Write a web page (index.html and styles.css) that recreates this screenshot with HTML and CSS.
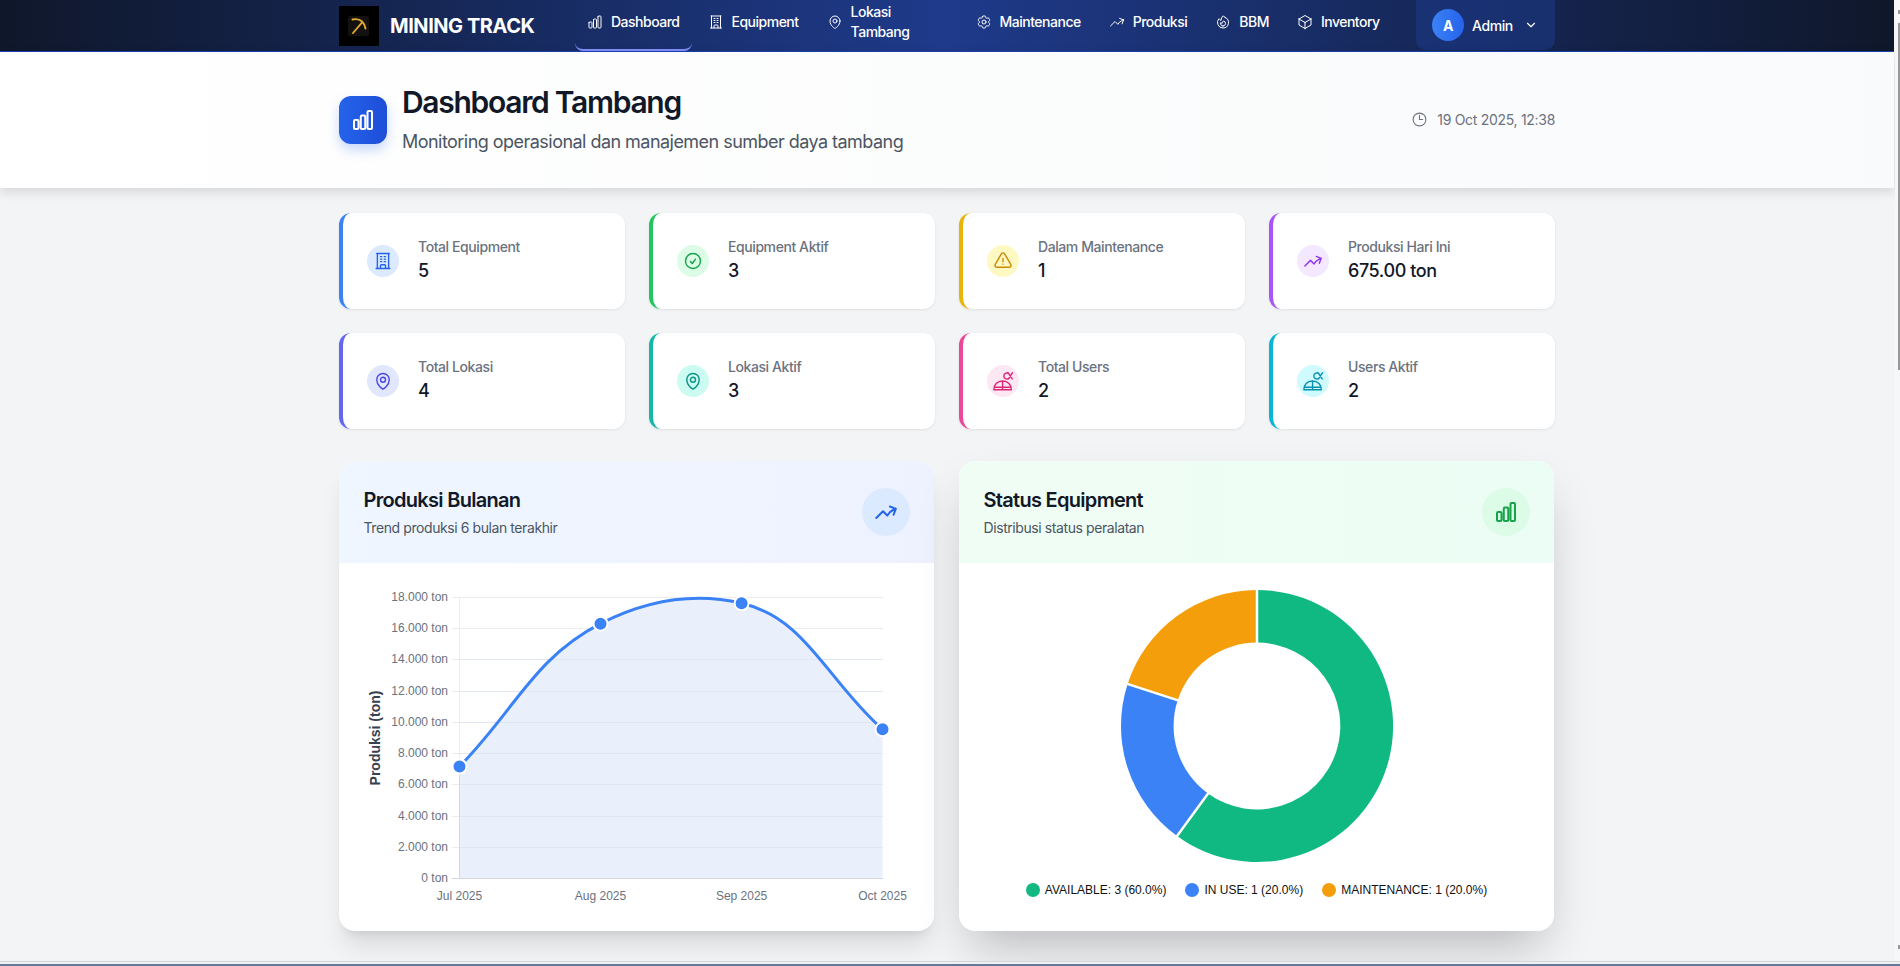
FILE: index.html
```html
<!DOCTYPE html>
<html lang="id">
<head>
    <meta charset="UTF-8">
    <title>Dashboard Tambang</title>
    <link rel="stylesheet" href="styles.css">
</head>
<body>
    <svg class="sprite" width="0" height="0">
        <symbol id="i-chart" viewBox="0 0 24 24"><path d="M3 13.125C3 12.504 3.504 12 4.125 12h2.250c.621 0 1.125.504 1.125 1.125v6.750C7.500 20.496 6.996 21 6.375 21h-2.250A1.125 1.125 0 0 1 3 19.875v-6.750ZM9.750 8.625c0-.621.504-1.125 1.125-1.125h2.250c.621 0 1.125.504 1.125 1.125v11.250c0 .621-.504 1.125-1.125 1.125h-2.250a1.125 1.125 0 0 1-1.125-1.125V8.625ZM16.500 4.125c0-.621.504-1.125 1.125-1.125h2.250C20.496 3 21 3.504 21 4.125v15.750c0 .621-.504 1.125-1.125 1.125h-2.250a1.125 1.125 0 0 1-1.125-1.125V4.125Z"/></symbol>
        <symbol id="i-building" viewBox="0 0 24 24"><path d="M3.750 21h16.500M4.500 3h15M5.250 3v18m13.500-18v18M9 6.750h1.500m-1.500 3h1.500m-1.500 3h1.500m3-6H15m-1.500 3H15m-1.500 3H15M9 21v-3.375c0-.621.504-1.125 1.125-1.125h3.750c.621 0 1.125.504 1.125 1.125V21"/></symbol>
        <symbol id="i-pin" viewBox="0 0 24 24"><path d="M15 10.500a3 3 0 1 1-6 0 3 3 0 0 1 6 0Z"/><path d="M19.500 10.500c0 7.142-7.500 11.250-7.500 11.250S4.500 17.642 4.500 10.500a7.500 7.500 0 1 1 15 0Z"/></symbol>
        <symbol id="i-gear" viewBox="0 0 24 24"><path d="M9.594 3.940c.09-.542.56-.94 1.110-.94h2.593c.55 0 1.020.398 1.110.94l.213 1.281c.063.374.313.686.645.870.074.04.147.083.22.127.325.196.72.257 1.075.124l1.217-.456a1.125 1.125 0 0 1 1.370.490l1.296 2.247a1.125 1.125 0 0 1-.26 1.431l-1.003.827c-.293.241-.438.613-.43.992a7.723 7.723 0 0 1 0 .255c-.008.378.137.75.43.991l1.004.827c.424.35.534.955.26 1.430l-1.298 2.247a1.125 1.125 0 0 1-1.369.491l-1.217-.456c-.355-.133-.75-.072-1.076.124a6.470 6.470 0 0 1-.22.128c-.331.183-.581.495-.644.869l-.213 1.281c-.09.543-.56.94-1.110.94h-2.594c-.55 0-1.019-.398-1.110-.94l-.213-1.281c-.062-.374-.312-.686-.644-.870a6.520 6.520 0 0 1-.22-.127c-.325-.196-.72-.257-1.076-.124l-1.217.456a1.125 1.125 0 0 1-1.369-.49l-1.297-2.247a1.125 1.125 0 0 1 .26-1.431l1.004-.827c.292-.24.437-.613.43-.991a6.932 6.932 0 0 1 0-.255c.007-.38-.138-.751-.43-.992l-1.004-.827a1.125 1.125 0 0 1-.26-1.430l1.297-2.247a1.125 1.125 0 0 1 1.370-.491l1.216.456c.356.133.751.072 1.076-.124.072-.044.146-.086.22-.128.332-.183.582-.495.644-.869l.214-1.280Z"/><path d="M15 12a3 3 0 1 1-6 0 3 3 0 0 1 6 0Z"/></symbol>
        <symbol id="i-trend" viewBox="0 0 24 24"><path d="M2.250 18 9 11.250l4.306 4.306a11.950 11.950 0 0 1 5.814-5.518l2.740-1.220m0 0-5.940-2.281m5.940 2.280-2.280 5.941"/></symbol>
        <symbol id="i-fire" viewBox="0 0 24 24"><path d="M15.362 5.214A8.252 8.252 0 0 1 12 21 8.250 8.250 0 0 1 6.038 7.047 8.287 8.287 0 0 0 9 9.601a8.983 8.983 0 0 1 3.361-6.867 8.210 8.210 0 0 0 3 2.480Z"/><path d="M12 18a3.750 3.750 0 0 0 .495-7.468 5.990 5.990 0 0 0-1.925 3.547 5.975 5.975 0 0 1-2.133-1.001A3.750 3.750 0 0 0 12 18Z"/></symbol>
        <symbol id="i-cube" viewBox="0 0 24 24"><path d="m21 7.500-9-5.250L3 7.500m18 0-9 5.250m9-5.250v9l-9 5.250M3 7.500l9 5.250M3 7.500v9l9 5.250m0-9v9"/></symbol>
        <symbol id="i-clock" viewBox="0 0 24 24"><path d="M12 6v6h4.500m4.500 0a9 9 0 1 1-18 0 9 9 0 0 1 18 0Z"/></symbol>
        <symbol id="i-check" viewBox="0 0 24 24"><path d="M9 12.750 11.250 15 15 9.750M21 12a9 9 0 1 1-18 0 9 9 0 0 1 18 0Z"/></symbol>
        <symbol id="i-warn" viewBox="0 0 24 24"><path d="M12 9v3.750m-9.303 3.376c-.866 1.500.217 3.374 1.948 3.374h14.710c1.730 0 2.813-1.874 1.948-3.374L13.949 3.378c-.866-1.500-3.032-1.500-3.898 0L2.697 16.126ZM12 15.750h.007v.008H12v-.008Z"/></symbol>
        <symbol id="i-users" viewBox="0 0 24 24"><path d="M1 22.500c0-6 4-10.500 10.500-10.500S22 16.500 22 22.500ZM1.500 19.500h20M11.500 12v10.500M19 2.800C16 1.500 13 3 13 6s3 4.500 6 3.200M18 2l5 7.500M23.500 2l-5 7.500"/></symbol>
    </svg>

    <div class="page">
        <nav class="navbar">
            <div class="nav-inner">
                <div class="brand">
                    <div class="brand-logo">
                        <svg viewBox="0 0 40 40" width="40" height="40"><rect x="9" y="10" width="21" height="20" rx="2" fill="#141210" stroke="none"/><path d="M13.500 13.500c5-1 11-.5 13 9M23 16.500 14 27" stroke="#e3ac2d" stroke-width="1.900"/></svg>
                    </div>
                    <span class="brand-name">MINING TRACK</span>
                </div>
                <div class="nav-links">
                    <a class="nav-link active"><svg class="nav-icon"><use href="#i-chart"/></svg>Dashboard</a>
                    <a class="nav-link"><svg class="nav-icon"><use href="#i-building"/></svg>Equipment</a>
                    <a class="nav-link nav-wrap"><svg class="nav-icon"><use href="#i-pin"/></svg><span>Lokasi<br>Tambang</span></a>
                    <a class="nav-link"><svg class="nav-icon"><use href="#i-gear"/></svg>Maintenance</a>
                    <a class="nav-link"><svg class="nav-icon"><use href="#i-trend"/></svg>Produksi</a>
                    <a class="nav-link"><svg class="nav-icon"><use href="#i-fire"/></svg>BBM</a>
                    <a class="nav-link"><svg class="nav-icon"><use href="#i-cube"/></svg>Inventory</a>
                </div>
                <div class="user-menu">
                    <span class="avatar">A</span>
                    <span class="user-name">Admin</span>
                    <svg class="chev" viewBox="0 0 24 24"><path d="m6 9 6 6 6-6"/></svg>
                </div>
            </div>
        </nav>

        <header class="page-header">
            <div class="header-inner">
                <div class="header-left">
                    <div class="header-icon"><svg><use href="#i-chart"/></svg></div>
                    <div>
                        <h1>Dashboard Tambang</h1>
                        <p>Monitoring operasional dan manajemen sumber daya tambang</p>
                    </div>
                </div>
                <div class="header-time"><svg><use href="#i-clock"/></svg>19 Oct 2025, 12:38</div>
            </div>
        </header>

        <main class="content">
            <section class="stats">
                <div class="stat blue"><div class="stat-icon"><svg><use href="#i-building"/></svg></div><div><div class="stat-label">Total Equipment</div><div class="stat-value">5</div></div></div>
                <div class="stat green"><div class="stat-icon"><svg><use href="#i-check"/></svg></div><div><div class="stat-label">Equipment Aktif</div><div class="stat-value">3</div></div></div>
                <div class="stat yellow"><div class="stat-icon"><svg><use href="#i-warn"/></svg></div><div><div class="stat-label">Dalam Maintenance</div><div class="stat-value">1</div></div></div>
                <div class="stat purple"><div class="stat-icon"><svg><use href="#i-trend"/></svg></div><div><div class="stat-label">Produksi Hari Ini</div><div class="stat-value">675.00 ton</div></div></div>
                <div class="stat indigo"><div class="stat-icon"><svg><use href="#i-pin"/></svg></div><div><div class="stat-label">Total Lokasi</div><div class="stat-value">4</div></div></div>
                <div class="stat teal"><div class="stat-icon"><svg><use href="#i-pin"/></svg></div><div><div class="stat-label">Lokasi Aktif</div><div class="stat-value">3</div></div></div>
                <div class="stat pink"><div class="stat-icon"><svg><use href="#i-users"/></svg></div><div><div class="stat-label">Total Users</div><div class="stat-value">2</div></div></div>
                <div class="stat cyan"><div class="stat-icon"><svg><use href="#i-users"/></svg></div><div><div class="stat-label">Users Aktif</div><div class="stat-value">2</div></div></div>
            </section>

            <section class="charts">
                <div class="card">
                    <div class="card-head head-blue">
                        <div><h2>Produksi Bulanan</h2><p>Trend produksi 6 bulan terakhir</p></div>
                        <div class="head-icon"><svg><use href="#i-trend"/></svg></div>
                    </div>
                    <svg class="plot" viewBox="0 0 594 368" width="594" height="368">
                        <path class="grid" d="M112 34.500H542.500M112 65.500H542.500M112 96.500H542.500M112 128.500H542.500M112 159.500H542.500M112 190.500H542.500M112 221.500H542.500M112 253.500H542.500M112 284.500H542.500"/>
                        <path class="grid" d="M119.500 34V316"/>
                        <path class="area" d="M119.500 203.500C175.700 146 194 95 260.500 60.700C305 38 353 29 401.600 40.300C465.900 55 486 116 542.500 166.300V315.500H119.500Z"/>
                        <path class="grid-over" d="M120 96.500H542.500M120 128.500H542.500M120 159.500H542.500M120 190.500H542.500M120 221.500H542.500M120 253.500H542.500M120 284.500H542.500"/>
                        <path class="axis" d="M112 315.500H542.500M119.500 203V315"/>
                        <path class="line" d="M119.500 203.500C175.700 146 194 95 260.500 60.700C305 38 353 29 401.600 40.300C465.900 55 486 116 542.500 166.300"/>
                        <circle class="dot" cx="119.500" cy="203.500" r="7"/>
                        <circle class="dot" cx="260.500" cy="60.700" r="7"/>
                        <circle class="dot" cx="401.600" cy="40.300" r="7"/>
                        <circle class="dot" cx="542.500" cy="166.300" r="7"/>
                        <g class="y-labels">
                            <text x="108" y="38">18.000 ton</text>
                            <text x="108" y="69">16.000 ton</text>
                            <text x="108" y="100">14.000 ton</text>
                            <text x="108" y="132">12.000 ton</text>
                            <text x="108" y="163">10.000 ton</text>
                            <text x="108" y="194">8.000 ton</text>
                            <text x="108" y="225">6.000 ton</text>
                            <text x="108" y="257">4.000 ton</text>
                            <text x="108" y="288">2.000 ton</text>
                            <text x="108" y="319">0 ton</text>
                        </g>
                        <g class="x-labels">
                            <text x="119.500" y="337">Jul 2025</text>
                            <text x="260.500" y="337">Aug 2025</text>
                            <text x="401.600" y="337">Sep 2025</text>
                            <text x="542.500" y="337">Oct 2025</text>
                        </g>
                        <text class="y-title" transform="translate(40 175) rotate(-90)">Produksi (ton)</text>
                    </svg>
                </div>
                <div class="card card-raised">
                    <div class="card-head head-green">
                        <div><h2>Status Equipment</h2><p>Distribusi status peralatan</p></div>
                        <div class="head-icon"><svg><use href="#i-chart"/></svg></div>
                    </div>
                    <div class="donut-body">
                        <svg class="donut" viewBox="0 0 280 280" width="278" height="278">
                            <path class="s-green" d="M140 3A137 137 0 1 1 59.500 250.800L90.600 208A84 84 0 1 0 140 56Z"/>
                            <path class="s-blue" d="M59.500 250.800A137 137 0 0 1 9.700 97.700L60.100 114A84 84 0 0 0 90.600 208Z"/>
                            <path class="s-amber" d="M9.700 97.700A137 137 0 0 1 140 3V56A84 84 0 0 0 60.100 114Z"/>
                            <path class="gaps" d="M140 1V58M58 252.800 91.800 206.400M7.800 97.100 62 114.700"/>
                        </svg>
                        <div class="legend">
                            <span class="legend-item"><i class="swatch s-green"></i>AVAILABLE: 3 (60.0%)</span>
                            <span class="legend-item"><i class="swatch s-blue"></i>IN USE: 1 (20.0%)</span>
                            <span class="legend-item"><i class="swatch s-amber"></i>MAINTENANCE: 1 (20.0%)</span>
                        </div>
                    </div>
                </div>
            </section>
        </main>
    </div>
    <div class="scrollbar"><div class="thumb"></div></div>
    <div class="window-edge"></div>
</body>
</html>
```

FILE: styles.css
```css
* { box-sizing: border-box; }
html, body { height: 966px; overflow: hidden; }
body { margin: 0; background: #f3f4f6; font-family: Inter, "Noto Sans", sans-serif; color: #111827; letter-spacing: -0.026em; position: relative; }
.sprite { position: absolute; }
svg { display: block; fill: none; stroke: currentColor; stroke-width: 1.5; stroke-linecap: round; stroke-linejoin: round; }
.page { width: 1894px; }

.navbar { height: 52px; background: linear-gradient(90deg, #0f172a, #1e3a8a 50%, #0f172a); border-bottom: 1px solid #1e40af; }
.nav-inner { width: 1216px; margin: 0 auto; height: 51px; display: flex; align-items: stretch; }
.brand { display: flex; align-items: center; gap: 11px; width: 236px; }
.brand-logo { width: 40px; height: 40px; background: #000; }
.brand-name { font-size: 20px; font-weight: 700; color: #fff; letter-spacing: -0.45px; }
.nav-links { display: flex; align-items: stretch; gap: 4px; flex: 1; }
.nav-link { display: flex; align-items: center; gap: 8px; padding: 0 12px 7px; font-size: 14px; font-weight: 500; color: #fff; line-height: 20px; letter-spacing: -0.5px; }
.nav-link.active { border-bottom: 2px solid #818cf8; border-radius: 0 0 8px 8px; padding-bottom: 5px; }
.nav-wrap { width: 145px; }
.nav-icon { width: 16px; height: 16px; flex: none; }
.user-menu { width: 139px; height: 50px; display: flex; align-items: center; padding: 0 16px; gap: 8px; background: rgba(30, 58, 138, .55); border-radius: 0 0 10px 10px; color: #fff; font-size: 14px; font-weight: 500; }
.avatar { width: 32px; height: 32px; border-radius: 50%; background: linear-gradient(90deg, #3b82f6, #2563eb); display: flex; align-items: center; justify-content: center; font-weight: 700; font-size: 14px; }
.user-name { margin-right: 3px; }
.chev { width: 14px; height: 14px; stroke-width: 2; }

.page-header { height: 136px; background: linear-gradient(90deg, #fff, #f9fafb); box-shadow: 0 4px 10px rgba(0, 0, 0, .12); position: relative; }
.header-inner { width: 1216px; height: 100%; margin: 0 auto; display: flex; align-items: center; justify-content: space-between; }
.header-left { display: flex; align-items: center; gap: 15px; }
.header-icon { width: 48px; height: 48px; border-radius: 12px; background: linear-gradient(90deg, #2563eb, #1d4ed8); color: #fff; display: flex; align-items: center; justify-content: center; box-shadow: 0 6px 12px rgba(37, 99, 235, .25); }
.header-icon svg { width: 24px; height: 24px; stroke-width: 2; }
h1 { margin: 0 0 8px; font-size: 30px; line-height: 36px; font-weight: 600; letter-spacing: -1.3px; }
.page-header p { margin: 0; font-size: 18px; line-height: 28px; color: #4b5563; letter-spacing: -0.535px; }
.header-time { display: flex; align-items: center; gap: 9px; font-size: 14px; color: #6b7280; margin-bottom: 2px; letter-spacing: -0.3px; }
.header-time svg { width: 17px; height: 17px; }

.content { width: 1216px; margin: 0 auto; padding-top: 25px; }
.stats { display: grid; grid-template-columns: repeat(4, 1fr); gap: 24px; }
.stat { height: 96px; background: #fff; border-radius: 12px; border-left: 4px solid; display: flex; align-items: center; gap: 19px; padding: 0 24px; box-shadow: 0 1px 3px rgba(0, 0, 0, .08); }
.stat-icon { width: 32px; height: 32px; border-radius: 50%; display: flex; align-items: center; justify-content: center; flex: none; }
.stat-icon svg { width: 20px; height: 20px; stroke-width: 1.700; }
.stat-label { font-size: 14px; line-height: 20px; font-weight: 500; color: #6b7280; }
.stat-value { font-size: 18px; line-height: 28px; font-weight: 500; color: #111827; }
.blue { border-color: #3b82f6; } .blue .stat-icon { background: #dbeafe; color: #2563eb; }
.green { border-color: #22c55e; } .green .stat-icon { background: #dcfce7; color: #16a34a; }
.yellow { border-color: #eab308; } .yellow .stat-icon { background: #fef9c3; color: #ca8a04; }
.purple { border-color: #a855f7; } .purple .stat-icon { background: #f3e8ff; color: #9333ea; }
.indigo { border-color: #6366f1; } .indigo .stat-icon { background: #e0e7ff; color: #4f46e5; }
.teal { border-color: #14b8a6; } .teal .stat-icon { background: #ccfbf1; color: #0d9488; }
.pink { border-color: #ec4899; } .pink .stat-icon { background: #fce7f3; color: #db2777; }
.cyan { border-color: #06b6d4; } .cyan .stat-icon { background: #cffafe; color: #0891b2; }

.charts { display: grid; grid-template-columns: 595px 595px; gap: 25px; margin-top: 32px; }
.card { height: 470px; background: #fff; border-radius: 16px; box-shadow: 0 20px 25px -5px rgba(0, 0, 0, .1), 0 8px 10px -6px rgba(0, 0, 0, .1); }
.card-raised { box-shadow: 0 25px 50px -12px rgba(0, 0, 0, .25); }
.card-head { height: 102px; display: flex; align-items: center; justify-content: space-between; padding: 0 24px 0 24.500px; border-radius: 16px 16px 0 0; }
.head-blue { background: linear-gradient(90deg, #eff6ff, #eef2ff); }
.head-green { background: linear-gradient(90deg, #f0fdf4, #ecfdf5); }
h2 { margin: 0; font-size: 20px; line-height: 28px; font-weight: 600; letter-spacing: -0.7px; }
.card-head p { margin: 4px 0 0; font-size: 14px; line-height: 20px; color: #4b5563; }
.head-icon { width: 48px; height: 48px; border-radius: 50%; display: flex; align-items: center; justify-content: center; }
.head-icon svg { width: 24px; height: 24px; stroke-width: 2; }
.head-blue .head-icon { background: #dbeafe; color: #2563eb; }
.head-green .head-icon { background: #dcfce7; color: #16a34a; }

.plot { letter-spacing: 0; margin-left: 1px; }
.grid { stroke: #ececef; stroke-width: 1; }
.grid-over { stroke: #dfe5f2; stroke-width: 1; }
.area { fill: #e9f0fc; stroke: none; }
.axis { stroke: #d3d7e0; stroke-width: 1; }
.line { stroke: #3b82f6; stroke-width: 3; }
.dot { fill: #3b82f6; stroke: #fff; stroke-width: 2; }
.plot text { font-family: "Liberation Sans", sans-serif; font-size: 12px; fill: #6b7280; stroke: none; }
.y-labels text { text-anchor: end; }
.x-labels text { text-anchor: middle; }
.plot .y-title { font-size: 14px; font-weight: 700; fill: #374151; text-anchor: middle; }

.donut-body { display: flex; flex-direction: column; align-items: center; padding-top: 24px; }
.donut path { stroke: none; }
.donut .gaps { stroke: #fff; stroke-width: 2.500; stroke-linecap: butt; }
.legend { display: flex; justify-content: center; gap: 19px; margin-top: 18px; font-family: "Liberation Sans", sans-serif; font-size: 12px; letter-spacing: 0; color: #111; }
.legend-item { display: flex; align-items: center; gap: 5px; }
.swatch { width: 14px; height: 14px; border-radius: 50%; }
.s-green { background: #10b981; fill: #10b981; }
.s-blue { background: #3b82f6; fill: #3b82f6; }
.s-amber { background: #f59e0b; fill: #f59e0b; }

/* window chrome on top of the page */
.scrollbar { position: absolute; right: 0; top: 0; bottom: 5px; width: 5px; background: #f7f7f8; padding-top: 23px; }
.scrollbar::before, .scrollbar::after { content: ""; position: absolute; right: 0; width: 2.500px; height: 4px; background: #979797; }
.scrollbar::before { top: 10px; }
.scrollbar::after { bottom: 12px; }
.thumb { height: 347px; width: 2.500px; margin-left: 2.500px; background: #979797; }
.window-edge { position: absolute; left: 0; right: 0; bottom: 0; height: 5px; background: linear-gradient(#d3d5d8 0, #d3d5d8 20%, #eef0f2 20%, #eef0f2 60%, #64789a 60%); }
```
